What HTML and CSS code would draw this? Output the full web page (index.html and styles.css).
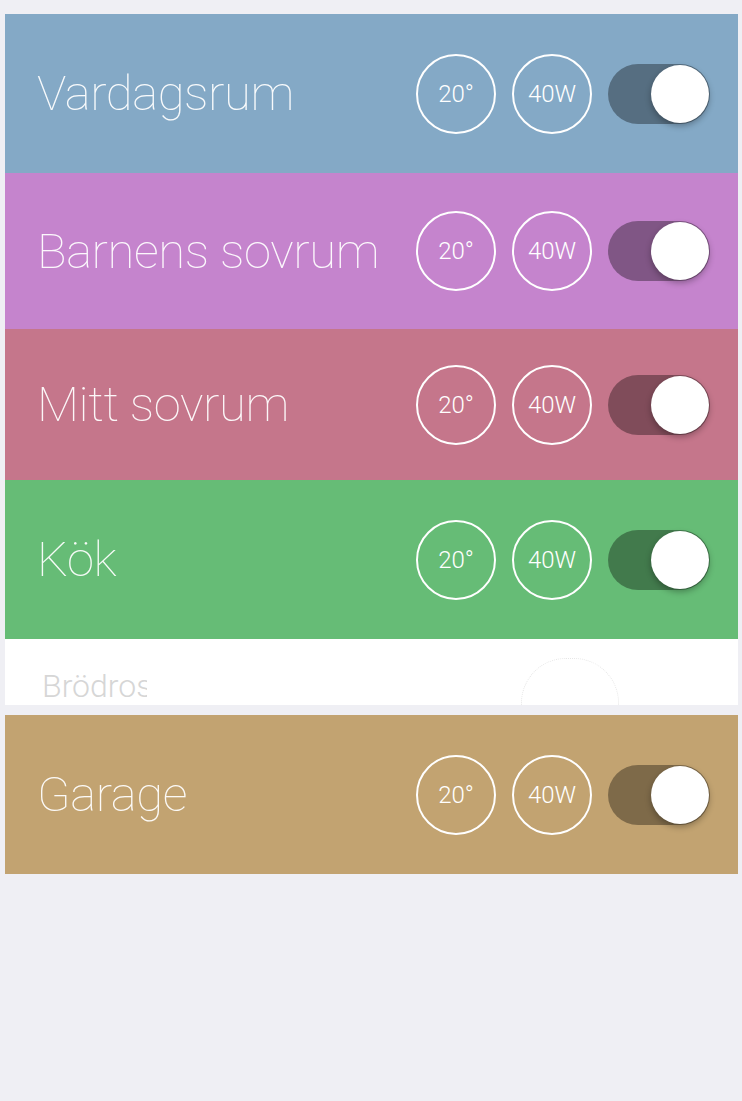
FILE: index.html
```html
<!DOCTYPE html>
<html lang="sv">
<head>
<meta charset="utf-8">
<link rel="stylesheet" href="styles.css">
</head>
<body>
<div class="list">
  <div class="row row-blue">
    <div class="title">Vardagsrum</div>
    <div class="badge">20°</div>
    <div class="badge">40W</div>
    <div class="toggle"><div class="knob"></div></div>
  </div>
  <div class="row row-purple">
    <div class="title">Barnens sovrum</div>
    <div class="badge">20°</div>
    <div class="badge">40W</div>
    <div class="toggle"><div class="knob"></div></div>
  </div>
  <div class="row row-red">
    <div class="title">Mitt sovrum</div>
    <div class="badge">20°</div>
    <div class="badge">40W</div>
    <div class="toggle"><div class="knob"></div></div>
  </div>
  <div class="row row-green">
    <div class="title">Kök</div>
    <div class="badge">20°</div>
    <div class="badge">40W</div>
    <div class="toggle"><div class="knob"></div></div>
  </div>
  <div class="ghost">
    <div class="ghost-title">Brödrost</div>
    <div class="ghost-ring"></div>
  </div>
  <div class="row row-tan">
    <div class="title">Garage</div>
    <div class="badge">20°</div>
    <div class="badge">40W</div>
    <div class="toggle"><div class="knob"></div></div>
  </div>
</div>
</body>
</html>
```
FILE: styles.css
```css
html, body {
  margin: 0;
  padding: 0;
  background: #efeff4;
  width: 742px;
  height: 1101px;
  overflow: hidden;
}
.list {
  padding-top: 14px;
  margin-left: 5px;
  width: 733px;
  display: flex;
  flex-direction: column;
}
.row {
  display: flex;
  align-items: center;
  padding-left: 32px;
  padding-right: 28px;
  box-sizing: border-box;
  height: 159px;
  font-family: Roboto, "Liberation Sans", sans-serif;
  color: rgba(255, 255, 255, 0.94);
}
.row-blue { background: #84a9c6; height: 159px; }
.row-purple { background: #c584cd; height: 156px; }
.row-red { background: #c5768b; height: 151px; }
.row-green { background: #66bc76; height: 159px; }
.row-tan { background: #c2a371; height: 159px; margin-top: 10px; }
.title {
  flex: 1;
  font-size: 49px;
  font-weight: 100;
  white-space: nowrap;
  letter-spacing: -0.4px;
}
.badge {
  width: 80px;
  height: 80px;
  box-sizing: border-box;
  border: 2px solid #fff;
  border-radius: 50%;
  display: flex;
  align-items: center;
  justify-content: center;
  font-size: 24px;
  font-weight: 300;
  color: #fff;
  margin-right: 16px;
}
.toggle {
  position: relative;
  width: 102px;
  height: 60px;
  border-radius: 30px;
  background: rgba(0, 0, 0, 0.35);
}
.knob {
  position: absolute;
  right: 1px;
  top: 1px;
  width: 58px;
  height: 58px;
  border-radius: 50%;
  background: #fff;
  box-shadow: 0 3px 6px rgba(0, 0, 0, 0.3);
}
.ghost {
  height: 66px;
  background: #fff;
  position: relative;
  overflow: hidden;
  font-family: Roboto, "Liberation Sans", sans-serif;
}
.ghost-title {
  position: absolute;
  left: 37px;
  top: 28px;
  width: 105px;
  overflow: hidden;
  white-space: nowrap;
  font-size: 32px;
  font-weight: 300;
  color: #d6d6d6;
}
.ghost-ring {
  position: absolute;
  left: 516px;
  top: 19px;
  width: 98px;
  height: 90px;
  border-radius: 45px;
  border: 1px dotted #e6e6e6;
  box-sizing: border-box;
}
```
